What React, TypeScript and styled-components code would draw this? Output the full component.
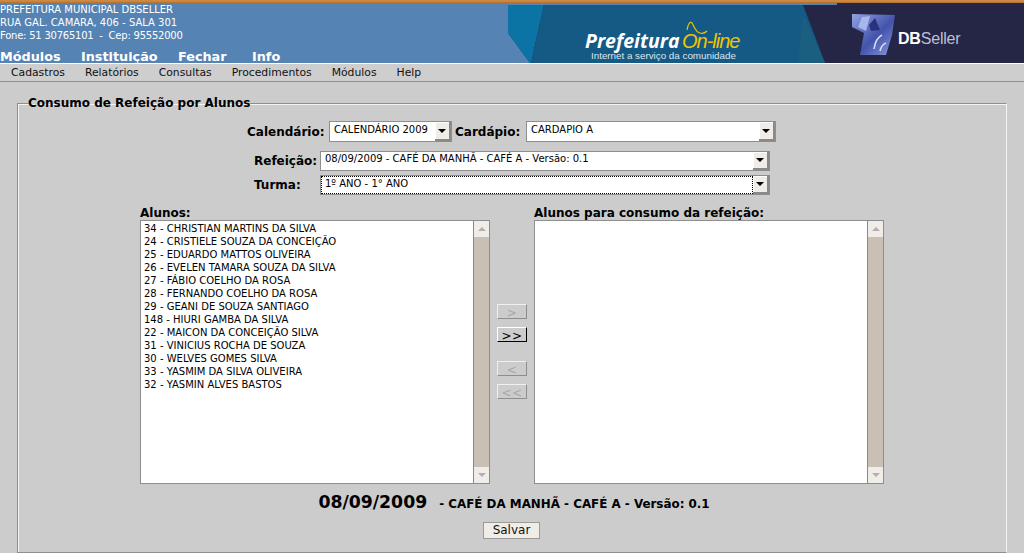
import React from "react";
import styled, { createGlobalStyle } from "styled-components";

const GlobalStyle = createGlobalStyle`
  html, body {
    margin: 0;
    padding: 0;
    height: 553px;
    overflow: hidden;
    background: #cccccc;
    font-family: "DejaVu Sans", sans-serif;
  }
`;

const Page = styled.div`
  width: 1024px;
  height: 553px;
  overflow: hidden;
  display: flex;
  flex-direction: column;
`;

const TopLine = styled.div`
  flex: none;
  height: 3px;
  background: linear-gradient(#d08c44, #c8823c 60%, #a86c34);
`;

const Header = styled.header`
  flex: none;
  height: 60px;
  background: #5583b3;
  display: flex;
  justify-content: space-between;
  color: #fff;
`;

const HeaderInfo = styled.div`
  display: flex;
  flex-direction: column;
`;

const Address = styled.div<{ $tight?: boolean }>`
  font-size: 10px;
  line-height: 13px;
  white-space: pre;
  ${(p) => (p.$tight ? "letter-spacing: -0.23px;" : "")}
`;

const TopNav = styled.nav`
  margin-top: 8px;
  display: flex;
  font-size: 12.8px;
  font-weight: bold;
  line-height: 14px;
`;

const TopNavItem = styled.span<{ $w: number }>`
  width: ${(p) => p.$w}px;
  white-space: nowrap;
`;

const Banner = styled.div`
  position: relative;
  width: 516px;
  height: 60px;
`;

const BannerArt = styled.svg`
  display: block;
`;

const LogoWord = styled.span`
  position: absolute;
  left: 77px;
  top: 29px;
  font-family: "Open Sans", sans-serif;
  font-size: 19.5px;
  font-weight: bold;
  font-style: italic;
  color: #fff;
  line-height: 18px;
`;

const LogoOnline = styled.span`
  position: absolute;
  left: 174px;
  top: 29px;
  font-family: "Liberation Sans", sans-serif;
  font-size: 20px;
  font-style: italic;
  letter-spacing: -1px;
  color: #f2c400;
  line-height: 18px;
`;

const LogoSub = styled.span`
  position: absolute;
  left: 83px;
  top: 47px;
  font-family: "Liberation Sans", sans-serif;
  font-size: 9.8px;
  color: #dde6ee;
  line-height: 11px;
  white-space: nowrap;
`;

const SellerWord = styled.span`
  position: absolute;
  left: 390px;
  top: 28px;
  font-family: "Liberation Sans", sans-serif;
  font-size: 16px;
  color: #bcc1d4;
  line-height: 16px;
  letter-spacing: -0.2px;
  b {
    color: #fff;
  }
`;

const MenuBar = styled.nav`
  flex: none;
  height: 19px;
  box-sizing: border-box;
  background: #cecece;
  border-top: 1px solid #fff;
  border-bottom: 1px solid #8f8f8f;
  display: flex;
  gap: 20px;
  padding-left: 11px;
  font-size: 10.8px;
  line-height: 17px;
  color: #111;
`;

const Content = styled.main`
  flex: none;
  padding: 15px 17px 0;
`;

const Fieldset = styled.fieldset`
  margin: 0;
  padding: 0;
  height: 456px;
  box-sizing: border-box;
  border: 1px solid #8e8e8e;
  border-right-color: #f4f4f4;
  display: flex;
  flex-direction: column;
  align-items: center;
  box-shadow: inset 1px 1px 0 #f4f4f4;
`;

const Legend = styled.legend`
  margin-left: 10px;
  padding: 0;
  font-size: 12px;
  font-weight: bold;
  line-height: 13px;
  color: #000;
`;

const FormRow = styled.div<{ $pad: number; $top: number }>`
  align-self: stretch;
  display: flex;
  align-items: center;
  gap: 4px;
  margin-top: ${(p) => p.$top}px;
  padding-left: ${(p) => p.$pad}px;
`;

const Label = styled.label<{ $w?: number; $nudge?: boolean }>`
  font-size: 12px;
  font-weight: bold;
  color: #000;
  white-space: nowrap;
  ${(p) => (p.$w ? `width: ${p.$w}px;` : "")}
  ${(p) => (p.$nudge ? "margin-left: -1px;" : "")}
`;

const Select = styled.div<{ $w: number; $h?: number }>`
  width: ${(p) => p.$w}px;
  height: ${(p) => p.$h ?? 20}px;
  box-sizing: border-box;
  border: 1px solid #8e8e8e;
  background: #fff;
  display: flex;
  align-items: stretch;
  flex: none;
`;

const SelectValue = styled.div<{ $focus?: boolean; $lh?: number }>`
  flex: 1;
  min-width: 0;
  font-size: 10px;
  line-height: ${(p) => p.$lh ?? 14}px;
  padding-left: 4px;
  color: #000;
  white-space: nowrap;
  overflow: hidden;
  ${(p) => (p.$focus ? "outline: 1px dotted #000; outline-offset: -1px;" : "")}
`;

const SelectButton = styled.div`
  width: 16px;
  background: #f0ede8;
  border-right: 2px solid #8c8984;
  border-bottom: 2px solid #8c8984;
  box-shadow: inset 1px 1px 0 #fff;
  box-sizing: border-box;
  display: flex;
  align-items: center;
  justify-content: center;
  &::after {
    content: "";
    border-left: 4px solid transparent;
    border-right: 4px solid transparent;
    border-top: 4px solid #000;
  }
`;

const Lists = styled.div`
  margin-top: 11px;
  display: grid;
  grid-template-columns: 350px 44px 350px;
  align-self: flex-start;
  margin-left: 122px;
  grid-template-rows: 14px 264px;
`;

const ColumnTitle = styled.div`
  font-size: 12px;
  font-weight: bold;
  line-height: 14px;
  color: #000;
  white-space: nowrap;
`;

const ListBox = styled.div`
  border: 1px solid #8e8e8e;
  background: #fff;
  display: flex;
  box-sizing: border-box;
  height: 264px;
`;

const ListItems = styled.div`
  flex: 1;
  padding-top: 1px;
  font-size: 10px;
  line-height: 13px;
  color: #000;
  padding-left: 3px;
  white-space: nowrap;
`;

const ScrollBar = styled.div`
  width: 15px;
  background: #c9bfb4;
  border-left: 1px solid #8c8984;
  display: flex;
  flex-direction: column;
  justify-content: space-between;
`;

const ScrollArrow = styled.div<{ $down?: boolean }>`
  height: 16px;
  background: #f0ede8;
  display: flex;
  align-items: center;
  justify-content: center;
  &::after {
    content: "";
    border-left: 4px solid transparent;
    border-right: 4px solid transparent;
    ${(p) => (p.$down ? "border-top: 4px solid #b0b0b0;" : "border-bottom: 4px solid #b0b0b0;")}
  }
`;

const Mover = styled.div`
  grid-row: 2;
  grid-column: 2;
  display: flex;
  flex-direction: column;
  align-items: center;
  padding-top: 84px;
`;

const MoveButton = styled.div<{ $active?: boolean; $gap: number }>`
  width: 30px;
  height: 15px;
  margin-top: ${(p) => p.$gap}px;
  box-sizing: border-box;
  background: #cccccc;
  border: 1px solid ${(p) => (p.$active ? "#fff" : "#f0f0f0")};
  border-right-color: ${(p) => (p.$active ? "#000" : "#8e8e8e")};
  border-bottom-color: ${(p) => (p.$active ? "#000" : "#8e8e8e")};
  color: ${(p) => (p.$active ? "#000" : "#a8a8a8")};
  font-size: 12px;
  line-height: 16px;
  text-align: center;
  letter-spacing: 0.5px;
`;

const Summary = styled.div`
  margin-top: 8px;
  padding-left: 4px;
  display: flex;
  align-items: baseline;
  gap: 12px;
  font-weight: bold;
  color: #000;
  line-height: 20px;
`;

const SummaryDate = styled.span`
  font-size: 17.3px;
`;

const SummaryText = styled.span`
  font-size: 11.9px;
`;

const SaveButton = styled.button`
  margin: 8px 1px 0 0;
  width: 57px;
  height: 17px;
  padding: 0;
  background: #f0ede8;
  border: 1px solid #9a9a9a;
  font-family: inherit;
  font-size: 12px;
  line-height: 15px;
  color: #111;
`;

const alunos = [
  "34 - CHRISTIAN MARTINS DA SILVA",
  "24 - CRISTIELE SOUZA DA CONCEIÇÃO",
  "25 - EDUARDO MATTOS OLIVEIRA",
  "26 - EVELEN TAMARA SOUZA DA SILVA",
  "27 - FÁBIO COELHO DA ROSA",
  "28 - FERNANDO COELHO DA ROSA",
  "29 - GEANI DE SOUZA SANTIAGO",
  "148 - HIURI GAMBA DA SILVA",
  "22 - MAICON DA CONCEIÇÃO SILVA",
  "31 - VINICIUS ROCHA DE SOUZA",
  "30 - WELVES GOMES SILVA",
  "33 - YASMIM DA SILVA OLIVEIRA",
  "32 - YASMIN ALVES BASTOS",
];

const topNav = [
  { label: "Módulos", w: 81 },
  { label: "Instituição", w: 97 },
  { label: "Fechar", w: 74 },
  { label: "Info", w: 40 },
];
const menu = ["Cadastros", "Relatórios", "Consultas", "Procedimentos", "Módulos", "Help"];

const BannerDrawing = () => (
  <BannerArt width="516" height="60" viewBox="0 0 516 60">
    <defs>
      <linearGradient id="cube" x1="0" y1="0" x2="1" y2="1">
        <stop offset="0" stopColor="#93a3e2" />
        <stop offset="0.55" stopColor="#4353ab" />
        <stop offset="1" stopColor="#8d9cdc" />
      </linearGradient>
      <filter id="soft">
        <feGaussianBlur stdDeviation="0.5" />
      </filter>
    </defs>
    <rect width="516" height="60" fill="#252546" />
    <rect width="329" height="2" fill="#5583b3" />
    <polygon points="0,0 0,2 0,30 22,60 0,60" fill="#5583b3" />
    <polygon points="0,2 36,2 23,60 22,60 0,30" fill="#0b74a5" />
    <polygon points="36,2 295,2 317,60 23,60" fill="#145a84" />
    <polygon points="295,12 317,60 290,60" fill="#1b5f80" />
    <path d="M179 27 C180 21 182 18 184 20 C186 23 188 30 192 30 C195 31 197 30 199 28" fill="none" stroke="#f2c400" strokeWidth="1.2" />
    <g filter="url(#soft)">
      <path d="M344 11 L387 12 L384 32 L378 52 L352 52 L356 30 L344 24 Z" fill="url(#cube)" />
      <path d="M354 14 L362 13 L358 28 L350 24 Z" fill="#a9b6ea" />
      <path d="M361 22 L367 15 L372 27 L363 28 Z" fill="#29307e" />
      <path d="M366 46 C367 40 370 34 374 32" fill="none" stroke="#d8def5" strokeWidth="1.5" />
      <path d="M372 48 C373 44 375 41 378 40" fill="none" stroke="#d8def5" strokeWidth="1.5" />
    </g>
  </BannerArt>
);

export default function App() {
  return (
    <Page>
      <GlobalStyle />
      <TopLine />
      <Header>
        <HeaderInfo>
          <Address>PREFEITURA MUNICIPAL DBSELLER</Address>
          <Address>RUA GAL. CAMARA, 406 - SALA 301</Address>
          <Address $tight>{"Fone: 51 30765101  -  Cep: 95552000"}</Address>
          <TopNav>
            {topNav.map((t) => (
              <TopNavItem key={t.label} $w={t.w}>{t.label}</TopNavItem>
            ))}
          </TopNav>
        </HeaderInfo>
        <Banner>
          <BannerDrawing />
          <LogoWord>Prefeitura</LogoWord>
          <LogoOnline>On-line</LogoOnline>
          <LogoSub>Internet a serviço da comunidade</LogoSub>
          <SellerWord>
            <b>DB</b>Seller
          </SellerWord>
        </Banner>
      </Header>
      <MenuBar>
        {menu.map((m) => (
          <span key={m}>{m}</span>
        ))}
      </MenuBar>
      <Content>
        <Fieldset>
          <Legend>Consumo de Refeição por Alunos</Legend>
          <FormRow $pad={229} $top={11}>
            <Label $w={78}>Calendário:</Label>
            <Select $w={123} $h={21}>
              <SelectValue $lh={16}>CALENDÁRIO 2009</SelectValue>
              <SelectButton />
            </Select>
            <Label $w={67} $nudge>Cardápio:</Label>
            <Select $w={250} $h={21}>
              <SelectValue $lh={16}>CARDAPIO A</SelectValue>
              <SelectButton />
            </Select>
          </FormRow>
          <FormRow $pad={236} $top={9}>
            <Label $w={62}>Refeição:</Label>
            <Select $w={450}>
              <SelectValue>08/09/2009 - CAFÉ DA MANHÃ - CAFÉ A - Versão: 0.1</SelectValue>
              <SelectButton />
            </Select>
          </FormRow>
          <FormRow $pad={236} $top={4}>
            <Label $w={62}>Turma:</Label>
            <Select $w={450}>
              <SelectValue $focus $lh={16}>1º ANO - 1° ANO</SelectValue>
              <SelectButton />
            </Select>
          </FormRow>
          <Lists>
            <ColumnTitle>Alunos:</ColumnTitle>
            <span />
            <ColumnTitle>Alunos para consumo da refeição:</ColumnTitle>
            <ListBox>
              <ListItems>
                {alunos.map((a) => (
                  <div key={a}>{a}</div>
                ))}
              </ListItems>
              <ScrollBar>
                <ScrollArrow />
                <ScrollArrow $down />
              </ScrollBar>
            </ListBox>
            <Mover>
              <MoveButton $gap={0}>&gt;</MoveButton>
              <MoveButton $gap={8} $active>&gt;&gt;</MoveButton>
              <MoveButton $gap={19}>&lt;</MoveButton>
              <MoveButton $gap={8}>&lt;&lt;</MoveButton>
            </Mover>
            <ListBox>
              <ListItems />
              <ScrollBar>
                <ScrollArrow />
                <ScrollArrow $down />
              </ScrollBar>
            </ListBox>
          </Lists>
          <Summary>
            <SummaryDate>08/09/2009</SummaryDate>
            <SummaryText>- CAFÉ DA MANHÃ - CAFÉ A - Versão: 0.1</SummaryText>
          </Summary>
          <SaveButton>Salvar</SaveButton>
        </Fieldset>
      </Content>
    </Page>
  );
}
